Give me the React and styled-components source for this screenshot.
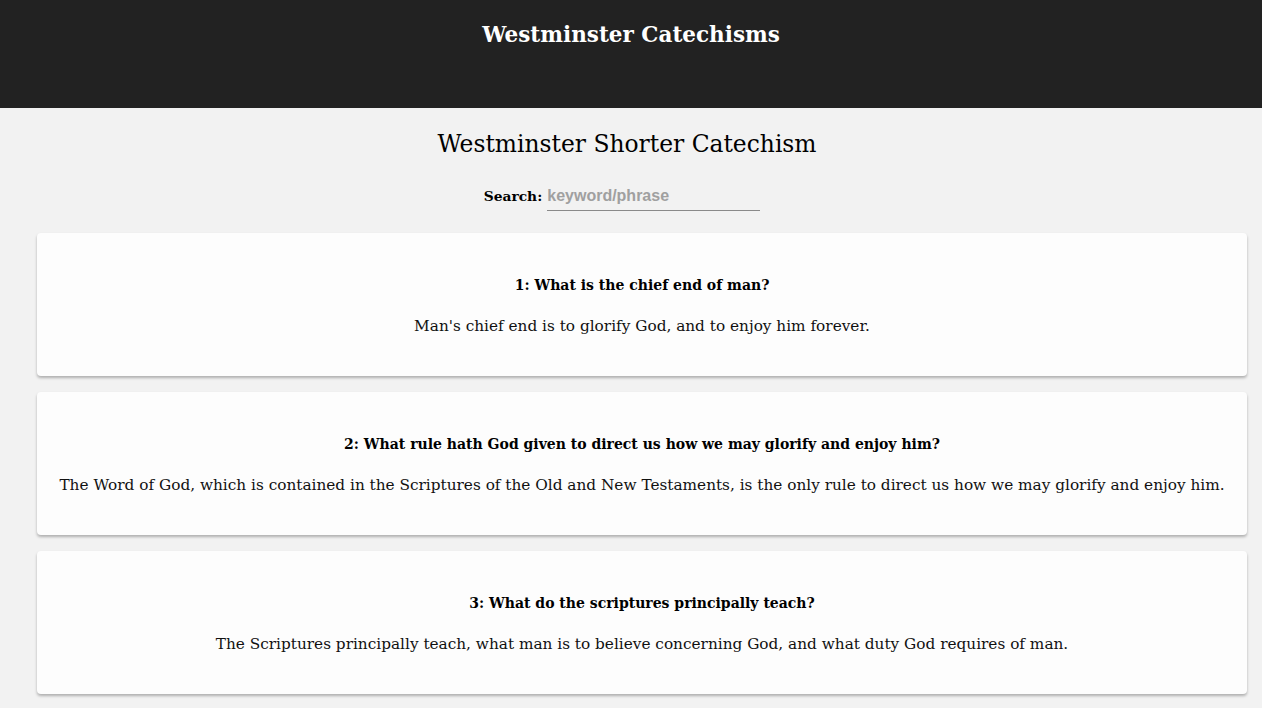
import React from 'react';
import styled, { createGlobalStyle } from 'styled-components';

const GlobalStyle = createGlobalStyle`
  body {
    margin: 0;
    background-color: #f2f2f2;
    font-family: "DejaVu Serif", "Liberation Serif", serif;
    color: #111;
  }
`;

const StHeader = styled.header`
  height: 108px;
  background-color: #222222;
  box-sizing: border-box;
  padding-top: 18px;
  text-align: center;
`;

const StSiteTitle = styled.h1`
  margin: 0;
  font-size: 21.5px;
  line-height: 34px;
  font-weight: bold;
  color: #ffffff;
`;

const StMain = styled.main`
  display: flex;
  flex-direction: column;
  align-items: center;
  padding: 0 15px 16px;
`;

const StTitle = styled.h2`
  margin: 21px 8px 22px 0;
  font-size: 23.4px;
  line-height: 30px;
  font-weight: normal;
  color: #000;
`;

const StSearchRow = styled.div`
  display: flex;
  align-items: center;
  gap: 5px;
  margin: 0 18px 22px 0;
`;

const StLabel = styled.label`
  font-size: 13.8px;
  font-weight: bold;
  color: #000;
`;

const StInput = styled.input`
  width: 213px;
  height: 30px;
  box-sizing: border-box;
  border: none;
  border-bottom: 1px solid #8a8a8a;
  background: transparent;
  font-family: "Liberation Sans", Arial, sans-serif;
  font-size: 16px;
  font-weight: bold;
  padding: 0;
  outline: none;
  &::placeholder {
    color: #a0a0a0;
  }
`;

const StList = styled.div`
  display: flex;
  flex-direction: column;
  gap: 16px;
  width: 100%;
  padding-left: 22px;
  box-sizing: border-box;
`;

const StCard = styled.section`
  background-color: #fdfdfd;
  border-radius: 4px;
  box-shadow: 0 2px 3px rgba(0, 0, 0, 0.28);
  padding: 40px 16px 38px;
  text-align: center;
`;

const StQuestion = styled.h3`
  margin: 0 0 17px;
  font-size: 14px;
  line-height: 24px;
  font-weight: bold;
  color: #000;
`;

const StAnswer = styled.p`
  margin: 0;
  font-size: 15.3px;
  line-height: 24px;
  color: #111;
`;

const questions = [
  {
    id: 1,
    q: 'What is the chief end of man?',
    a: "Man's chief end is to glorify God, and to enjoy him forever.",
  },
  {
    id: 2,
    q: 'What rule hath God given to direct us how we may glorify and enjoy him?',
    a: 'The Word of God, which is contained in the Scriptures of the Old and New Testaments, is the only rule to direct us how we may glorify and enjoy him.',
  },
  {
    id: 3,
    q: 'What do the scriptures principally teach?',
    a: 'The Scriptures principally teach, what man is to believe concerning God, and what duty God requires of man.',
  },
];

const App = () => {
  return (
    <>
      <GlobalStyle />
      <StHeader>
        <StSiteTitle>Westminster Catechisms</StSiteTitle>
      </StHeader>
      <StMain>
        <StTitle>Westminster Shorter Catechism</StTitle>
        <StSearchRow>
          <StLabel htmlFor='search'>Search:</StLabel>
          <StInput id='search' placeholder='keyword/phrase' />
        </StSearchRow>
        <StList>
          {questions.map(({ id, q, a }) => (
            <StCard key={id}>
              <StQuestion>{id + ': ' + q}</StQuestion>
              <StAnswer>{a}</StAnswer>
            </StCard>
          ))}
        </StList>
      </StMain>
    </>
  );
};

export default App;
